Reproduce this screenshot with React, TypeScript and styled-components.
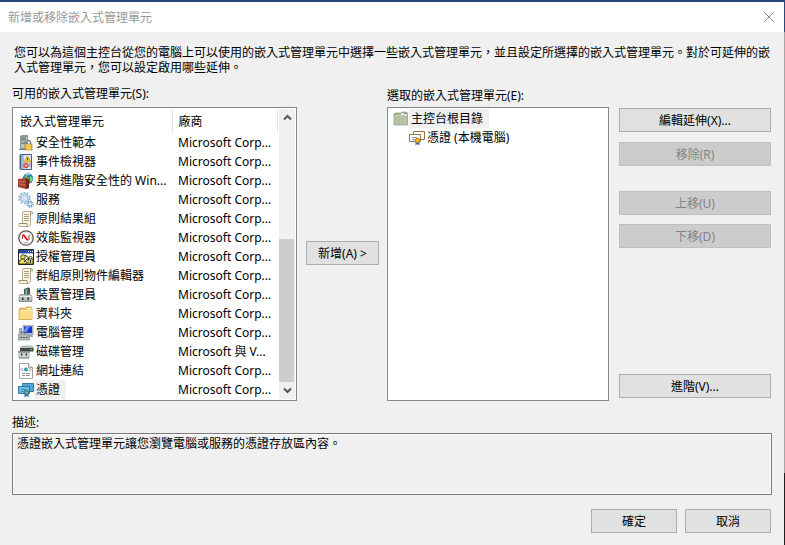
import React from "react";
import styled, { createGlobalStyle, css } from "styled-components";

const GlobalStyle = createGlobalStyle`
  *, *::before, *::after { box-sizing: border-box; }
  body {
    margin: 0;
    background: #f0f0f0;
    color: #000;
    font: 12px/15px "Noto Sans", "Noto Sans CJK TC", sans-serif;
  }
  button, textarea { font: inherit; color: inherit; }
`;

const Dialog = styled.main`
  display: flex;
  flex-direction: column;
  min-height: 100vh;
  padding-right: 1px;
  background:
    linear-gradient(#264a7c 0 30px, #a5a5a5 30px 471px, #1e1e1e 471px) right / 1px 100% no-repeat,
    #f0f0f0;
  border-top: 2px solid #264a7c;
`;

const TitleBar = styled.header`
  display: flex;
  align-items: center;
  justify-content: space-between;
  height: 30px;
  padding: 0 4px 0 8px;
  background: #fff;
`;

const Title = styled.h1`
  margin: 0;
  font-size: 12px;
  font-weight: 400;
  color: #999;
`;

const CloseButton = styled.button`
  display: grid;
  place-items: center;
  width: 22px;
  height: 22px;
  padding: 0;
  border: 0;
  background: none;
`;

const Content = styled.div`
  display: flex;
  flex-direction: column;
  padding: 13px 13px 12px 12px;
`;

const Intro = styled.p`
  margin: 0 -2px 11px 2px;
`;

const Columns = styled.div`
  display: grid;
  grid-template-columns: minmax(0, 285fr) 73px minmax(0, 222fr) 152px;
  column-gap: 9px;
`;

const Column = styled.section`
  display: flex;
  flex-direction: column;
`;

const Caption = styled.h2<{ $low?: boolean }>`
  height: 21px;
  margin: 0;
  padding-top: ${(p) => (p.$low ? 2 : 0)}px;
  font-size: 12px;
  font-weight: 400;
  white-space: nowrap;
`;

const Panel = styled.div`
  display: flex;
  flex: 1;
  min-height: 294px;
  padding: 1px;
  border: 1px solid #828790;
  background: #fff;
`;

const TableArea = styled.div`
  flex: 1;
  min-width: 0;
`;

const SnapinTable = styled.table`
  width: 100%;
  table-layout: fixed;
  border-collapse: collapse;
`;

const HeadCell = styled.th<{ $inset: number; $width?: number }>`
  width: ${(p) => (p.$width ? `${p.$width}%` : "auto")};
  height: 24px;
  padding: 0 0 0 ${(p) => p.$inset}px;
  border-right: 1px solid #e5e5e5;
  font-weight: 400;
  text-align: left;
`;

const Cell = styled.td`
  height: 19px;
  padding: 0 0 0 6px;
  white-space: nowrap;
`;

const NameCell = styled(Cell)`
  padding: 0 0 0 4px;
`;

const NameWrap = styled.div`
  display: flex;
  align-items: center;
  height: 19px;
  svg { flex: none; }
`;

const Name = styled.span<{ $selected?: boolean }>`
  padding: 2px 6px 2px 2px;
  white-space: nowrap;
  background: ${(p) => (p.$selected ? "#f0f0f0" : "transparent")};
`;

const ScrollBar = styled.div`
  display: flex;
  flex-direction: column;
  width: 16px;
  margin-left: 1px;
  background: #f0f0f0;
`;

const ScrollButton = styled.button`
  display: grid;
  place-items: center;
  height: 17px;
  padding: 0;
  border: 0;
  background: #f0f0f0;
`;

const ScrollTrack = styled.div`
  display: flex;
  flex: 1;
  align-items: flex-end;
`;

const ScrollThumb = styled.div`
  width: 15px;
  height: 56%;
  background: #cdcdcd;
`;

const MiddleColumn = styled.div`
  padding-top: 155px;
`;

const PushButton = styled.button<{ $width?: number }>`
  width: ${(p) => (p.$width ? `${p.$width}px` : "100%")};
  height: 24px;
  padding: 0;
  border: 1px solid #adadad;
  background: #e1e1e1;
  &:disabled {
    border-color: #bfbfbf;
    background: #ccc;
    color: #838383;
  }
`;

const TreeColumn = styled(Column)`
  margin: 0 1px 0 -1px;
`;

const Tree = styled.ul`
  margin: 0;
  padding: 0 0 0 4px;
  list-style: none;
`;

const SubTree = styled(Tree)`
  padding-left: 16px;
`;

const TreeItem = styled.div`
  display: flex;
  align-items: center;
  height: 19px;
`;

const Actions = styled.div`
  display: flex;
  flex-direction: column;
  padding: 22px 0 3px;
`;

const ActionGroup = styled.div<{ $end?: boolean; $gap?: number }>`
  display: flex;
  flex-direction: column;
  gap: ${(p) => p.$gap ?? 10}px;
  margin-bottom: 25px;
  ${(p) =>
    p.$end &&
    css`
      margin-top: auto;
      margin-bottom: 0;
    `}
`;

const DescriptionLabel = styled.label`
  margin-top: 14px;
  height: 18px;
`;

const Description = styled.textarea`
  width: calc(100% + 1px);
  height: 62px;
  padding: 2px 4px;
  border: 1px solid #7a7a7a;
  outline: 1px solid #fff;
  outline-offset: -2px;
  background: #f0f0f0;
  resize: none;
`;

const Footer = styled.footer`
  display: flex;
  justify-content: flex-end;
  gap: 8px;
  margin-top: 14px;
`;

const Icon = ({ children }: { children: React.ReactNode }) => (
  <svg width="16" height="16" viewBox="0 0 16 16" aria-hidden="true">
    {children}
  </svg>
);

const TemplateIcon = () => (
  <Icon>
    <path d="M2 1l2-1h6v14H2z" fill="#8d9996" />
    <path d="M3 2h6v11H3z" fill="#b9c5c1" />
    <path d="M3 3h5M3 5h5M3 8h5" stroke="#53605f" />
    <path d="M1 14h9v1H1z" fill="#77807d" />
    <path d="M8.500 9V7.500a2 2 0 0 1 4 0V9" fill="none" stroke="#85868a" strokeWidth="1.500" />
    <path d="M7 9h7v6H7z" fill="#e7b637" stroke="#a5740b" strokeWidth=".6" />
    <path d="M8 10h5M8 12h5M8 14h5" stroke="#ffe48a" strokeWidth=".8" />
  </Icon>
);

const EventIcon = () => (
  <Icon>
    <path d="M2.500.500h11v15h-11z" fill="#dbe8f5" stroke="#3f5f93" />
    <path d="M5 1v14" stroke="#6c8fbd" />
    <path d="M1 2h3M1 4h3M1 6h3M1 8h3M1 10h3M1 12h3M1 14h3" stroke="#5c6573" />
    <path d="M9.500 2l3.500 6H6z" fill="#ffd43a" stroke="#c28b12" strokeWidth=".7" />
    <path d="M9.500 4v2M9.500 6.700v.6" stroke="#503900" />
    <circle cx="8" cy="11.500" r="2.700" fill="#d64a3f" />
    <path d="M7 10.500l2 2m0-2l-2 2" stroke="#fff" />
    <path d="M11 10h2M11 12h2" stroke="#608bc2" />
  </Icon>
);

const FirewallIcon = () => (
  <Icon>
    <circle cx="10" cy="5.500" r="5.200" fill="#2478ce" />
    <path d="M7 2q3-2 4 0L9 4l2 2-2 3-3-2z" fill="#60b84b" />
    <path d="M12 3l3 2-1 3-2 1z" fill="#81d367" />
    <path d="M8 1.500q2-1 4 0" stroke="#a9e8ff" fill="none" />
    <path d="M0 6l8-1 3 2v8l-3 1-8-2z" fill="#9c3422" />
    <path d="M8 5l3 2v8l-3 1z" fill="#74221a" />
    <path d="M0 8.500l8 .5M0 11l8 1M3 6v2.500M6 5.500V9M2 8.500V11M5 9v2.500M3 11.500v3M6 12v3" stroke="#d98a6b" strokeWidth=".6" fill="none" />
  </Icon>
);

const GearsIcon = () => (
  <Icon>
    <circle cx="6.500" cy="6" r="5.500" fill="none" stroke="#8fb3d2" strokeWidth="1.500" strokeDasharray="2 1.450" />
    <circle cx="6.500" cy="6" r="3.700" fill="#f4faff" stroke="#a9c6e0" strokeWidth="2" />
    <circle cx="6.500" cy="6" r="1.600" fill="#fff" stroke="#7fa3c4" strokeWidth=".6" />
    <circle cx="12" cy="12" r="3.200" fill="none" stroke="#6f98bc" strokeWidth="1.200" strokeDasharray="1.300 1.200" />
    <circle cx="12" cy="12" r="2" fill="#fff" stroke="#8db0d2" strokeWidth="1.300" />
  </Icon>
);

const ScrollIcon = () => (
  <Icon>
    <path d="M4.500 2Q4.500.5 6 .5h7.500q1.500 0 1 2.500h-2v9.500q0 3-2 3H2q-2-.5-1-3h3.500z" fill="#fdf6de" stroke="#b3a98c" />
    <path d="M12.500 3V2q0-1.500 1.200-1.500M1.500 12.500H9q-.5 2 1 2.500" fill="none" stroke="#948b72" />
    <path d="M6 3.500h5M6 5.500h5M6 7.500h5M6 9.500h5" stroke="#a8a08a" />
  </Icon>
);

const GaugeIcon = () => (
  <Icon>
    <circle cx="8" cy="8" r="7.200" fill="#fff" stroke="#5e5654" strokeWidth="1.300" />
    <circle cx="8" cy="8" r="5.500" fill="none" stroke="#b5aaa8" strokeWidth=".8" strokeDasharray="1 1.400" />
    <path d="M5 4.500l5 6" fill="none" stroke="#dc1717" strokeWidth="1.900" />
    <path d="M4.500 5v4M11 5v5" stroke="#c62b2b" />
    <path d="M5.500 12.500h5" stroke="#b5b5b5" />
  </Icon>
);

const AuthorizationIcon = () => (
  <Icon>
    <path d="M.5.500h15v15H.5z" fill="#fff" stroke="#262626" />
    <path d="M1 1h14v3H1z" fill="#2447a3" />
    <path d="M10 2.500h1M12 2.500h1M14 2.500h1" stroke="#fff" />
    <path d="M1 4.500h14" stroke="#a9b8cf" />
    <circle cx="5" cy="8" r="2.300" fill="#f0df44" stroke="#222" strokeWidth=".8" />
    <path d="M1 15v-3l3-2h2l3 4v1z" fill="#e9e24d" stroke="#222" strokeWidth=".8" />
    <path d="M7 6l4 3-2 1-3 3" fill="none" stroke="#222" />
    <circle cx="12.500" cy="9" r="1.600" fill="none" stroke="#444" />
    <path d="M10 10h5v5h-5z" fill="#e8d72d" stroke="#333" strokeWidth=".8" />
    <path d="M12.500 11v3" stroke="#333" />
  </Icon>
);

const DeviceIcon = () => (
  <Icon>
    <path d="M6 2l4-1.500 2 .5v8H6z" fill="#4a5557" />
    <path d="M7 2.500l2.500-1V7H7z" fill="#7c898b" />
    <path d="M8 4h1v2H8z" fill="#64e36b" />
    <path d="M1 9l1-1.500h10.500L14 9v5H1z" fill="#bcc0c1" stroke="#8b9092" strokeWidth=".7" />
    <path d="M1.500 9.500H13.500" stroke="#e8e8e8" />
    <path d="M4 10.500h1.500V13H4zM9.500 10.500H11V13H9.500z" fill="#303638" />
    <path d="M1 14.500h13" stroke="#858a8c" />
  </Icon>
);

const FolderIcon = () => (
  <Icon>
    <path d="M1 3l1-1h6l1-1h4l1 1v11.500H1z" fill="#e9c362" stroke="#c19b42" strokeWidth=".7" />
    <path d="M9 2h4.500v1.500H9z" fill="#fff5cb" />
    <path d="M1.500 4.500H14v8.500H1.500z" fill="#f8dc85" />
    <path d="M2 4.500h12" stroke="#fff0b5" />
  </Icon>
);

const ComputerIcon = () => (
  <Icon>
    <path d="M5 0h10v10H5z" fill="#b9c2cb" stroke="#8c98a5" strokeWidth=".7" />
    <path d="M6 1.500h8v6.500H6z" fill="#1637cf" />
    <path d="M8 1.500h4l-4 6.500H6V5z" fill="#7f9ef8" opacity=".8" />
    <path d="M10 10h4l1 2h-4z" fill="#9aa3aa" />
    <path d="M1 3h3v5H1z" fill="#a5adaf" />
    <path d="M0 9h9l2.500 3v3H0z" fill="#b3babb" stroke="#7b8587" strokeWidth=".7" />
    <path d="M3 9V7h4v2" fill="none" stroke="#59656a" />
    <path d="M2 12h2v1H2zM5 12h2v1H5zM8 12h2v1H8z" fill="#44555d" />
  </Icon>
);

const DiskIcon = () => (
  <Icon>
    <path d="M2 4l2.500-2H14l1.500 2v3.500H2z" fill="#3f4546" />
    <path d="M2 4l2.500-2.500H14L15.500 4z" fill="#b6bbbc" />
    <path d="M12 5h2v1h-2z" fill="#3be14b" />
    <path d="M0 7h12v1.500H0z" fill="#85898b" />
    <path d="M1 8.500h10V14H1z" fill="#d4d7d8" stroke="#858a8b" strokeWidth=".7" />
    <path d="M3 9.500h1.500v2H3zM7.500 9.500H9v2H7.500z" fill="#303638" />
    <path d="M1 14h10" stroke="#848a8b" />
  </Icon>
);

const LinkIcon = () => (
  <Icon>
    <path d="M1.500.500h9l4 4v11h-13z" fill="#fff" stroke="#a3a3a3" />
    <path d="M10.500.500v4h4" fill="#e5e5e5" stroke="#a3a3a3" />
    <path d="M4.500 5L3 6.500 4.500 8M11.500 5L13 6.500 11.500 8" fill="none" stroke="#777" />
    <circle cx="8" cy="6.500" r="2" fill="#3186ce" />
    <path d="M7 6l2-1v2z" fill="#7cc47a" />
    <path d="M4 10.500h3M8 10.500h4M4 12.500h3M8 12.500h4" stroke="#8f8f8f" />
  </Icon>
);

const CertificateIcon = ({ blue = false }: { blue?: boolean }) => (
  <Icon>
    <path d="M4.500 1.500h11v8h-11z" fill={blue ? "#53a4d8" : "#fffdf2"} stroke={blue ? "#2f79a8" : "#907752"} />
    <path d="M.5 4.500h11v7H.5z" fill={blue ? "#6bb8e6" : "#fff"} stroke={blue ? "#2f79a8" : "#907752"} />
    <path d="M3 7.500h5M3 9.500h3" stroke={blue ? "#4a91bd" : "#829bc5"} />
    <path d="M6.500 11v4.500l2-1.500 2 1.500V11z" fill={blue ? "#317fac" : "#3269d4"} />
    <circle cx="8.500" cy="10.500" r="2.400" fill={blue ? "#49989f" : "#eba816"} stroke={blue ? "#396c73" : "#ad7410"} strokeWidth=".7" />
    <circle cx="8.500" cy="10.500" r=".8" fill={blue ? "#9fc68f" : "#ffd75c"} />
  </Icon>
);

const ConsoleFolderIcon = () => (
  <Icon>
    <path d="M1 3l1-1h6l1-1h4.500l1 1v12H1z" fill="#a8b494" stroke="#8d9d83" strokeWidth=".7" />
    <path d="M8 2h6v2H8z" fill="#dfeae4" />
    <path d="M11 2h3v1h-3z" fill="#6ba5b4" />
    <path d="M1.500 4.500h12.500v9H1.500z" fill="#b7c2a2" />
    <path d="M2 4.500h12" stroke="#cbd3b6" />
  </Icon>
);

const Chevron = ({ down = false }: { down?: boolean }) => (
  <svg width="9" height="7" viewBox="0 0 9 7" aria-hidden="true">
    <path d={down ? "M1 1.500l3.500 3.500L8 1.500" : "M1 5.500L4.500 2 8 5.500"} fill="none" stroke="#555" strokeWidth="2" />
  </svg>
);

const MS = "Microsoft Corp...";

const snapins = [
  { name: "安全性範本", vendor: MS, icon: <TemplateIcon /> },
  { name: "事件檢視器", vendor: MS, icon: <EventIcon /> },
  { name: "具有進階安全性的 Win...", vendor: MS, icon: <FirewallIcon /> },
  { name: "服務", vendor: MS, icon: <GearsIcon /> },
  { name: "原則結果組", vendor: MS, icon: <ScrollIcon /> },
  { name: "效能監視器", vendor: MS, icon: <GaugeIcon /> },
  { name: "授權管理員", vendor: MS, icon: <AuthorizationIcon /> },
  { name: "群組原則物件編輯器", vendor: MS, icon: <ScrollIcon /> },
  { name: "裝置管理員", vendor: MS, icon: <DeviceIcon /> },
  { name: "資料夾", vendor: MS, icon: <FolderIcon /> },
  { name: "電腦管理", vendor: MS, icon: <ComputerIcon /> },
  { name: "磁碟管理", vendor: "Microsoft 與 V...", icon: <DiskIcon /> },
  { name: "網址連結", vendor: MS, icon: <LinkIcon /> },
  { name: "憑證", vendor: MS, icon: <CertificateIcon blue />, selected: true },
];

export default function App() {
  return (
    <Dialog lang="zh-TW">
      <GlobalStyle />
      <TitleBar>
        <Title>新增或移除嵌入式管理單元</Title>
        <CloseButton aria-label="關閉">
          <svg width="12" height="12" viewBox="0 0 12 12" aria-hidden="true">
            <path d="M1 1l10 10M11 1L1 11" stroke="#8a8a8a" />
          </svg>
        </CloseButton>
      </TitleBar>
      <Content>
        <Intro>
          您可以為這個主控台從您的電腦上可以使用的嵌入式管理單元中選擇一些嵌入式管理單元，並且設定所選擇的嵌入式管理單元。對於可延伸的嵌入式管理單元，您可以設定啟用哪些延伸。
        </Intro>
        <Columns>
          <Column>
            <Caption id="available">可用的嵌入式管理單元(S):</Caption>
            <Panel>
              <TableArea>
                <SnapinTable aria-labelledby="available">
                  <thead>
                    <tr>
                      <HeadCell $inset={6} $width={60}>嵌入式管理單元</HeadCell>
                      <HeadCell $inset={6}>廠商</HeadCell>
                    </tr>
                  </thead>
                  <tbody>
                    {snapins.map((s) => (
                      <tr key={s.name} aria-selected={!!s.selected}>
                        <NameCell>
                          <NameWrap>
                            {s.icon}
                            <Name $selected={s.selected}>{s.name}</Name>
                          </NameWrap>
                        </NameCell>
                        <Cell>{s.vendor}</Cell>
                      </tr>
                    ))}
                  </tbody>
                </SnapinTable>
              </TableArea>
              <ScrollBar>
                <ScrollButton aria-label="向上捲動"><Chevron /></ScrollButton>
                <ScrollTrack><ScrollThumb /></ScrollTrack>
                <ScrollButton aria-label="向下捲動"><Chevron down /></ScrollButton>
              </ScrollBar>
            </Panel>
          </Column>
          <MiddleColumn>
            <PushButton>新增(A) &gt;</PushButton>
          </MiddleColumn>
          <TreeColumn>
            <Caption id="selected" $low>選取的嵌入式管理單元(E):</Caption>
            <Panel>
              <Tree aria-labelledby="selected">
                <li>
                  <TreeItem>
                    <ConsoleFolderIcon />
                    <Name $selected>主控台根目錄</Name>
                  </TreeItem>
                  <SubTree>
                    <li>
                      <TreeItem>
                        <CertificateIcon />
                        <Name>憑證 (本機電腦)</Name>
                      </TreeItem>
                    </li>
                  </SubTree>
                </li>
              </Tree>
            </Panel>
          </TreeColumn>
          <Actions>
            <ActionGroup>
              <PushButton>編輯延伸(X)...</PushButton>
              <PushButton disabled>移除(R)</PushButton>
            </ActionGroup>
            <ActionGroup $gap={9}>
              <PushButton disabled>上移(U)</PushButton>
              <PushButton disabled>下移(D)</PushButton>
            </ActionGroup>
            <ActionGroup $end>
              <PushButton>進階(V)...</PushButton>
            </ActionGroup>
          </Actions>
        </Columns>
        <DescriptionLabel htmlFor="description">描述:</DescriptionLabel>
        <Description
          id="description"
          readOnly
          value="憑證嵌入式管理單元讓您瀏覽電腦或服務的憑證存放區內容。"
        />
        <Footer>
          <PushButton $width={86}>確定</PushButton>
          <PushButton $width={86}>取消</PushButton>
        </Footer>
      </Content>
    </Dialog>
  );
}
